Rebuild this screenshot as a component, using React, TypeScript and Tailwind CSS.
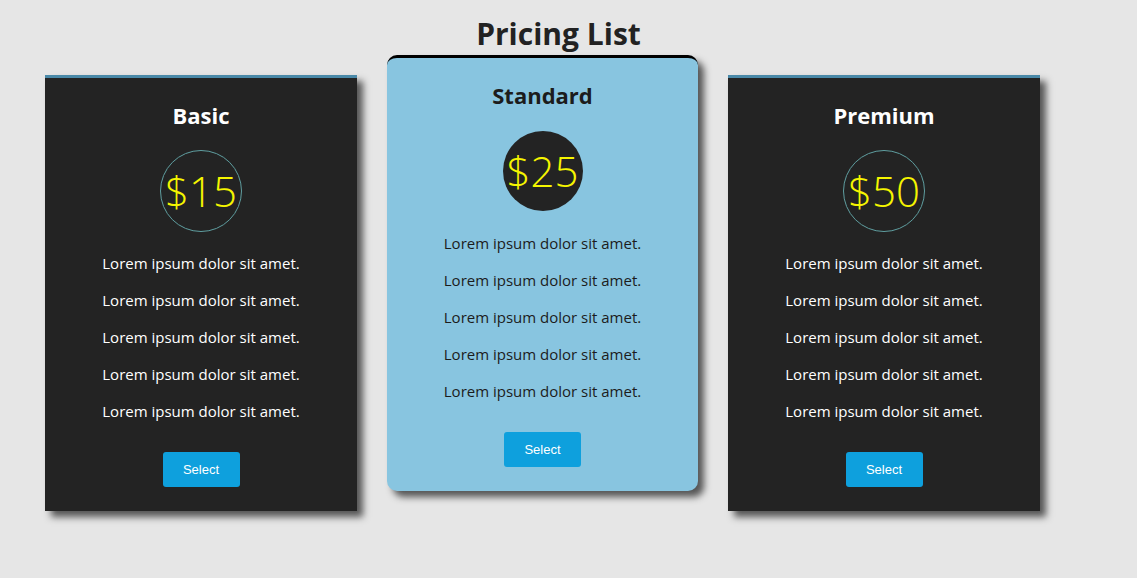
import React from "react";

type Plan = {
  name: string;
  price: string;
  featured?: boolean;
};

const plans: Plan[] = [
  { name: "Basic", price: "$15" },
  { name: "Standard", price: "$25", featured: true },
  { name: "Premium", price: "$50" },
];

const features = Array.from({ length: 5 }, () => "Lorem ipsum dolor sit amet.");

const PlanCard = ({ plan }: { plan: Plan }) => {
  const featured = plan.featured;
  return (
    <div
      className={
        featured
          ? "-mt-[20px] flex w-[311px] flex-col items-center rounded-[10px] border-t-[3px] border-black bg-[#88c5e0] px-4 pt-[22px] pb-[24px] text-[#1c1c1c] shadow-[6px_6px_7px_#555]"
          : "flex w-[312px] flex-col items-center border-t-[3px] border-[#4a89a8] bg-[#232323] px-4 pt-[22px] pb-[24px] text-white shadow-[6px_6px_7px_#555]"
      }
    >
      <h2 className="text-[22px] leading-[30px] font-bold">{plan.name}</h2>
      <div className="mt-[20px] flex h-[82px] w-[82px] items-center justify-center">
        <div
          className={
            featured
              ? "flex h-[80px] w-[80px] items-center justify-center rounded-full bg-[#232323]"
              : "flex h-[82px] w-[82px] items-center justify-center rounded-full border border-[#5f9ea0]"
          }
        >
          <span className="text-[42px] leading-none font-light text-[#f5f500]">{plan.price}</span>
        </div>
      </div>
      <ul className="mt-[20px] flex flex-col gap-[15px] text-center text-[15px] leading-[22px]">
        {features.map((f, i) => (
          <li key={i}>{f}</li>
        ))}
      </ul>
      <button className="mt-[30px] h-[35px] w-[77px] rounded-[3px] bg-[#0ea0dd] text-[13px] text-white" style={{ fontFamily: '"Liberation Sans", Arial, sans-serif' }}>
        Select
      </button>
    </div>
  );
};

export default function App() {
  return (
    <div className="min-h-[578px] w-full bg-[#e6e6e6]" style={{ fontFamily: '"Open Sans", "Noto Sans", sans-serif' }}>
      <h1 className="pt-[14px] pr-[20px] text-center text-[30px] leading-[40px] font-bold text-[#222]">Pricing List</h1>
      <div className="mt-[21px] flex items-start gap-[30px] pl-[45px]">
        {plans.map((p) => (
          <PlanCard key={p.name} plan={p} />
        ))}
      </div>
    </div>
  );
}
